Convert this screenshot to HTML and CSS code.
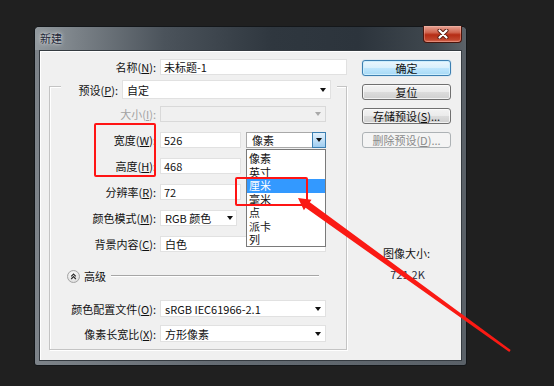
FILE: index.html
```html
<!DOCTYPE html>
<html lang="zh">
<head>
<meta charset="utf-8">
<title>新建</title>
<link rel="stylesheet" href="styles.css">
</head>
<body>
<div class="window">
  <div class="titlebar">
    <span class="title">新建</span>
    <div class="close"><svg width="14" height="10" viewBox="0 0 14 10"><path class="x-shadow" d="M3.5 1.5 L10.5 8.5 M10.5 1.5 L3.5 8.5"/><path class="x-mark" d="M3.5 1.5 L10.5 8.5 M10.5 1.5 L3.5 8.5"/></svg></div>
  </div>
  <div class="client">
    <div class="main">
      <div class="row name-row">
        <span class="lbl lbl-name">名称(<u>N</u>):</span>
        <div class="field w-name">未标题-1</div>
      </div>
      <div class="group">
        <div class="legend">
          <span class="lbl lbl-legend">预设(<u>P</u>):</span>
          <div class="field select w-preset"><span>自定</span><i class="arrow"></i></div>
        </div>
        <div class="row first">
          <span class="lbl off">大小(<u>I</u>):</span>
          <div class="field select dis w-full"><span></span><i class="arrow grey"></i></div>
        </div>
        <div class="row">
          <span class="lbl">宽度(<u>W</u>):</span>
          <div class="field w-num">526</div>
          <div class="field select open w-unit"><span>像素</span><span class="dropbtn"><i class="arrow"></i></span></div>
        </div>
        <div class="row">
          <span class="lbl">高度(<u>H</u>):</span>
          <div class="field w-num">468</div>
        </div>
        <div class="row">
          <span class="lbl">分辨率(<u>R</u>):</span>
          <div class="field w-num">72</div>
        </div>
        <div class="row">
          <span class="lbl">颜色模式(<u>M</u>):</span>
          <div class="field select w-mode"><span>RGB 颜色</span><i class="arrow"></i></div>
        </div>
        <div class="row">
          <span class="lbl">背景内容(<u>C</u>):</span>
          <div class="field select w-full"><span>白色</span><i class="arrow"></i></div>
        </div>
        <div class="adv">
          <span class="adv-btn"><svg width="13" height="13" viewBox="0 0 13 13"><defs><radialGradient id="g" cx="45%" cy="35%" r="65%"><stop offset="0" stop-color="#ffffff"/><stop offset="1" stop-color="#dcdcdc"/></radialGradient></defs><circle cx="6.5" cy="6.5" r="6" fill="url(#g)" stroke="#a4a4a4"/><path d="M4.2 6.3 L6.5 4 L8.8 6.3 M4.2 9 L6.5 6.7 L8.8 9" fill="none" stroke="#2a2a2a" stroke-width="1.2"/></svg></span>
          <span class="adv-text">高级</span>
          <span class="adv-line"></span>
        </div>
        <div class="row tall r-profile">
          <span class="lbl">颜色配置文件(<u>O</u>):</span>
          <div class="field select w-full"><span>sRGB IEC61966-2.1</span><i class="arrow"></i></div>
        </div>
        <div class="row tall r-aspect">
          <span class="lbl">像素长宽比(<u>X</u>):</span>
          <div class="field select w-full"><span>方形像素</span><i class="arrow"></i></div>
        </div>
      </div>
    </div>
    <div class="side">
      <div class="btn default">确定</div>
      <div class="btn">复位</div>
      <div class="btn">存储预设(<u>S</u>)...</div>
      <div class="btn disabled last">删除预设(<u>D</u>)...</div>
      <div class="size-label">图像大小:</div>
      <div class="size-value">721.2K</div>
    </div>
  </div>
</div>

<ul class="droplist">
  <li>像素</li>
  <li>英寸</li>
  <li class="sel">厘米</li>
  <li>毫米</li>
  <li>点</li>
  <li>派卡</li>
  <li>列</li>
</ul>

<div class="mark mark-1"></div>
<div class="mark mark-2"></div>
<svg class="pointer" width="554" height="386" viewBox="0 0 554 386"><polygon points="298,198 311.5,199.7 309.8,202.2 510.7,350 509.3,352 305.6,207.8 303.9,210.3"/></svg>
</body>
</html>
```
FILE: styles.css
```css
* { box-sizing: border-box; }
html, body { margin: 0; padding: 0; }
body {
  width: 554px;
  height: 386px;
  overflow: hidden;
  position: relative;
  background: #202020;
  font-family: "Noto Sans CJK SC", "Noto Sans", sans-serif;
  font-size: 11px;
  color: #111;
}
u { text-decoration: underline; text-underline-offset: 1px; }

.window {
  margin: 26px 0 0 34px;
  width: 433px;
  height: 340px;
  border: 1px solid #14171a;
  border-radius: 5px 5px 3px 3px;
  background: linear-gradient(90deg, #7d8389 0%, #656c73 40%, #5a6168 100%);
  padding: 0 4px 4px;
  display: flex;
  flex-direction: column;
}
.titlebar {
  height: 23px;
  margin: 0 -4px;
  padding: 0 4px 0 5px;
  display: flex;
  align-items: flex-start;
  border-radius: 4px 4px 0 0;
  background: linear-gradient(90deg, #939a9f 0%, #7a8187 10%, #4b535b 30%, #2f373f 55%, #2c343c 75%, #3f474e 92%, #5c6268 100%);
}
.title {
  margin-top: 5px;
  line-height: 13px;
  color: #1c2536;
  text-shadow: 0 0 5px rgba(255,255,255,.75), 0 0 2px rgba(255,255,255,.6);
}
.close {
  margin-left: auto;
  margin-top: -1px;
  width: 39px;
  height: 17px;
  border: 1px solid #4a150c;
  border-top: none;
  border-radius: 0 0 4px 4px;
  background: linear-gradient(#e7a394 0%, #d0654f 40%, #b52c14 55%, #c0452c 85%, #d9705a 100%);
  display: flex;
  align-items: center;
  justify-content: center;
  box-shadow: inset 0 0 0 1px rgba(255,200,190,.35);
}
.close svg path { fill: none; stroke-linecap: round; }
.x-shadow { stroke: #5a1a10; stroke-width: 4; }
.x-mark { stroke: #ffffff; stroke-width: 2.2; }

.client {
  flex: 1;
  background: #f0f0f0;
  border: 1px solid #353b41;
  box-shadow: inset 1px 1px 0 #ffffff;
  display: flex;
  align-items: flex-start;
  padding: 8px 0 0 9px;
}
.main { width: 298px; }
.side { width: 89px; margin-left: 15px; margin-top: 1px; }

.row {
  display: flex;
  align-items: center;
  height: 16px;
  gap: 4px;
  margin-top: 10px;
}
.row.first { margin-top: 7px; }
.row.tall { height: 17px; }
.r-profile { margin-top: 17px; }
.r-aspect { margin-top: 8px; }
.name-row { margin-top: 0; }
.lbl {
  width: 106px;
  text-align: right;
  white-space: nowrap;
  line-height: 14px;
  color: #111;
}
.lbl-name { width: 107px; }
.lbl.off { color: #a2a2a2; }

.field {
  height: 100%;
  background: #fff;
  border: 1px solid #e1e1e1;
  padding: 0 0 0 3px;
  line-height: 14px;
  white-space: nowrap;
  display: flex;
  align-items: center;
}
.select { justify-content: space-between; padding: 0 4px 0 4px; }
.select.dis { background: #f0f0f0; border-color: #d9d9d9; }
.arrow {
  display: block;
  width: 0;
  height: 0;
  border-style: solid;
  border-width: 4px 3.5px 0 3.5px;
  border-color: #111 transparent transparent transparent;
}
.arrow.grey { border-top-color: #a8a8a8; }

.w-name { width: 187px; }
.w-preset { width: 209px; height: 19px; }
.w-full { width: 166px; }
.w-num { width: 81px; }
.w-unit { width: 80px; margin-left: 1px; padding-left: 5px; }
.w-mode { width: 77px; padding-right: 3px; }

.select.open { border-color: #a9a9a9; padding-right: 0; }
.dropbtn {
  width: 14px;
  height: calc(100% + 2px);
  margin: -1px -1px -1px 0;
  border: 1px solid #3c7fb1;
  background: linear-gradient(#e3f1fc, #c2e0f7 50%, #9fcdf0 100%);
  display: flex;
  align-items: center;
  justify-content: center;
}

.group {
  margin-top: 11px;
  width: 298px;
  height: 264px;
  border: 1px solid #c4c4c4;
  box-shadow: inset 1px 1px 0 #ffffff, 1px 1px 0 #ffffff;
}
.legend {
  display: flex;
  align-items: center;
  gap: 4px;
  width: fit-content;
  margin: -7px 0 0 11px;
  padding-right: 6px;
  background: #f0f0f0;
}
.lbl-legend { width: 57px; }

.adv {
  display: flex;
  align-items: center;
  height: 14px;
  margin: 17px 0 0 17px;
}
.adv-btn { width: 13px; height: 13px; display: flex; }
.adv-text { margin-left: 4px; line-height: 14px; }
.adv-line {
  margin-left: 5px;
  width: 208px;
  height: 2px;
  border-top: 1px solid #a6a6a6;
  border-bottom: 1px solid #ffffff;
}

.btn {
  height: 16px;
  margin-bottom: 8px;
  border: 1px solid #707070;
  border-radius: 3px;
  background: linear-gradient(#f3f3f3 0%, #ebebeb 48%, #dcdcdc 52%, #cfcfcf 100%);
  box-shadow: inset 0 0 0 1px rgba(255,255,255,.7);
  text-align: center;
  line-height: 14px;
  color: #111;
  white-space: nowrap;
}
.btn.default {
  border-color: #3c7fb1;
  background: linear-gradient(#eaf6fd 0%, #d9f0fc 48%, #bee6fd 52%, #a7d9f5 100%);
  box-shadow: inset 0 0 0 1px #cdeefd, 0 0 1px #5fb0e8;
}
.btn.disabled {
  border-color: #adb2b5;
  background: #f4f4f4;
  color: #8a8a8a;
  box-shadow: none;
}
.btn.last { margin-bottom: 0; }
.size-label {
  margin-top: 98px;
  text-align: center;
  line-height: 14px;
  color: #111;
}
.size-value {
  margin-top: 7px;
  text-align: center;
  line-height: 14px;
  color: #2a2a3a;
  padding-left: 2px;
}

.droplist {
  position: absolute;
  left: 246px;
  top: 149px;
  width: 80px;
  height: 98px;
  margin: 0;
  padding: 2px 0 0;
  list-style: none;
  background: #fff;
  border: 1px solid #7a7a7a;
}
.droplist li {
  height: 13.5px;
  line-height: 13.5px;
  padding-left: 2px;
  color: #111;
}
.droplist li.sel { background: #3399ff; color: #fff; }

.mark {
  position: absolute;
  border: 2px solid #ff1414;
  border-radius: 2px;
}
.mark-1 { left: 94px; top: 123px; width: 62px; height: 54px; }
.mark-2 { left: 235px; top: 177px; width: 73px; height: 29px; }
.pointer { position: absolute; left: 0; top: 0; pointer-events: none; }
.pointer polygon { fill: #fa1a14; }
```
